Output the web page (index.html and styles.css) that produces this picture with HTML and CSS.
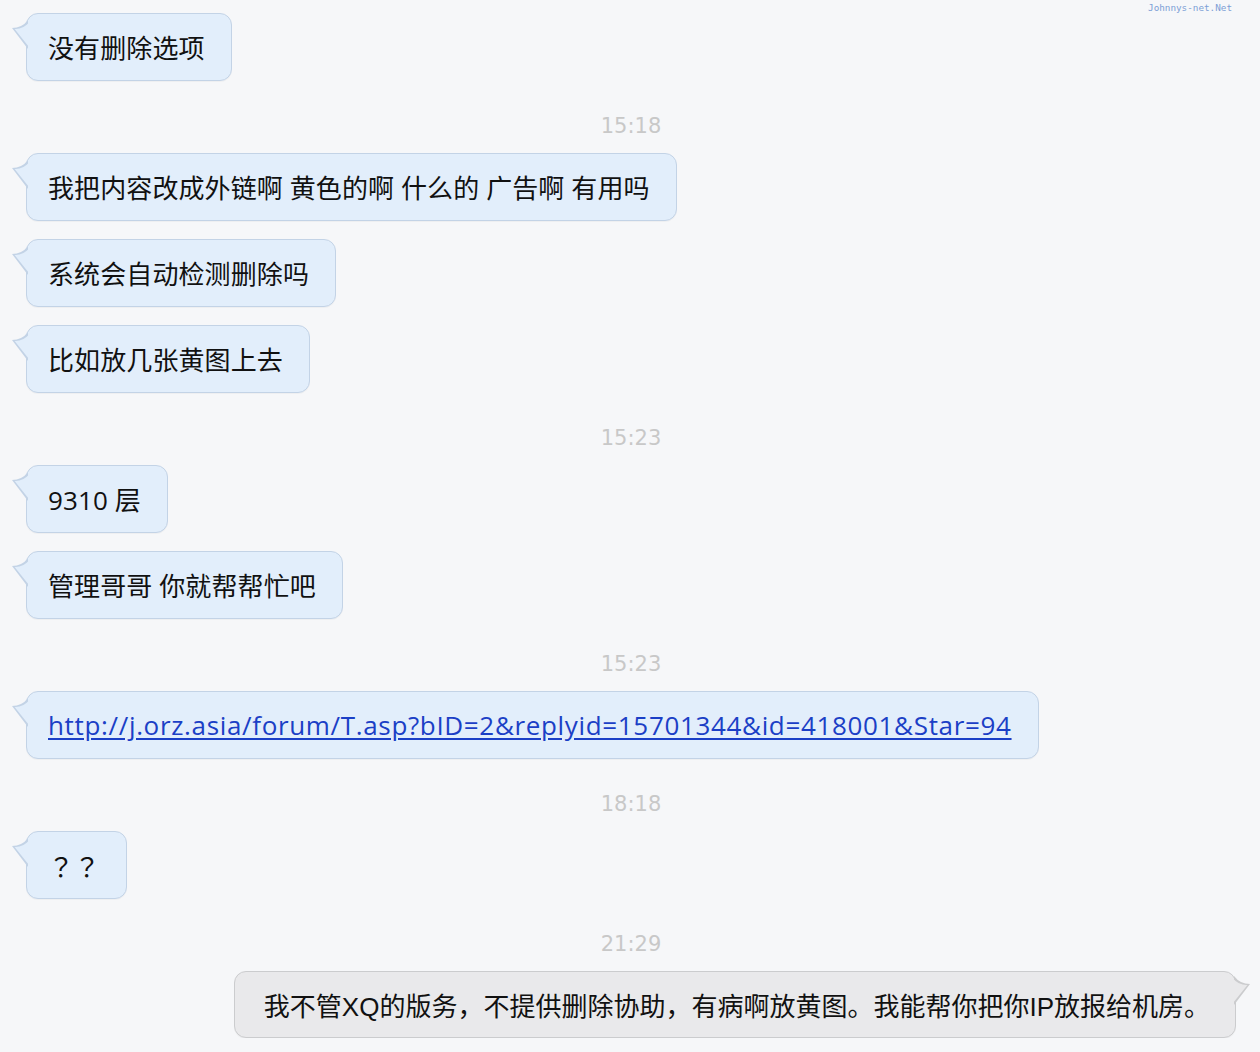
FILE: index.html
```html
<!DOCTYPE html>
<html lang="zh-CN">

<head>
  <meta charset="UTF-8">
  <meta name="viewport" content="width=device-width, initial-scale=1.0">
  <title>聊天记录</title>
  <link rel="stylesheet" href="styles.css">
</head>

<body>
  <div class="mark">Johnnys-net.Net</div>
  <div class="chat">
    <div class="msg in">没有删除选项</div>
    <div class="time">15:18</div>
    <div class="msg in">我把内容改成外链啊 黄色的啊 什么的 广告啊 有用吗</div>
    <div class="msg in">系统会自动检测删除吗</div>
    <div class="msg in">比如放几张黄图上去</div>
    <div class="time">15:23</div>
    <div class="msg in">9310 层</div>
    <div class="msg in">管理哥哥 你就帮帮忙吧</div>
    <div class="time">15:23</div>
    <div class="msg in"><a class="link" href="#">http://j.orz.asia/forum/T.asp?bID=2&amp;replyid=15701344&amp;id=418001&amp;Star=94</a></div>
    <div class="time">18:18</div>
    <div class="msg in q">？？</div>
    <div class="time">21:29</div>
    <div class="msg out">我不管XQ的版务，不提供删除协助，有病啊放黄图。我能帮你把你IP放报给机房。</div>
  </div>
</body>

</html>
```

FILE: styles.css
```css
body {
  margin: 0;
  background: #f6f7f9;
  font-family: 'Open Sans', 'Noto Sans CJK SC', sans-serif;
  color: #111;
}

.mark {
  position: absolute;
  top: 2px;
  right: 28px;
  font-family: 'DejaVu Sans Mono', monospace;
  font-size: 9.3px;
  color: #7d9fd6;
}

.chat {
  display: flex;
  flex-direction: column;
  padding: 13px 24px 0 26px;
}

.msg {
  position: relative;
  display: flex;
  align-items: center;
  box-sizing: border-box;
  height: 68px;
  padding: 0 26px 0 21px;
  border: 1px solid #c3d3e6;
  border-radius: 12px;
  background: #e2eefb;
  box-shadow: 0 1px 0 rgba(0, 0, 0, 0.03);
  font-size: 26px;
  letter-spacing: 0.1px;
  white-space: nowrap;
}

.msg + .msg {
  margin-top: 18px;
}

.in {
  align-self: flex-start;
}

/* 全角问号居中 */
.q {
  font-family: 'Noto Sans CJK TC', sans-serif;
}

/* 气泡左上角的小尾巴：before 画边框，after 画填充 */
.msg::before,
.msg::after {
  content: "";
  position: absolute;
  top: 4px;
  width: 18px;
  height: 32px;
}

.in::before,
.in::after {
  left: -15px;
}

.in::before {
  background: #c3d3e6;
  clip-path: path('M16 2 Q10 10 0 10 L16 31 Z');
}

.in::after {
  background: #e2eefb;
  clip-path: path('M17 4.5 Q11 11.5 2.6 11 L17 29 Z');
}

.out {
  align-self: flex-end;
  height: 67px;
  padding: 0 25px 0 29px;
  border-color: #cbccce;
  background: #e9e9eb;
  font-family: 'Liberation Sans', 'Noto Sans CJK SC', sans-serif;
  letter-spacing: 0;
}

.out::before,
.out::after {
  top: 2px;
  right: -15px;
}

.out::before {
  background: #cbccce;
  clip-path: path('M2 2 Q8 10 18 10 L2 31 Z');
}

.out::after {
  background: #e9e9eb;
  clip-path: path('M1 4.5 Q7 11.5 15.4 11 L1 29 Z');
}

.link {
  color: #1b3fc6;
  text-decoration: underline;
  text-underline-offset: 3px;
  letter-spacing: 0.66px;
}

.time {
  margin: 31px 0 13px;
  height: 28px;
  line-height: 28px;
  text-align: center;
  font-family: 'DejaVu Sans', sans-serif;
  font-size: 21px;
  color: #c8c8c8;
}
```
